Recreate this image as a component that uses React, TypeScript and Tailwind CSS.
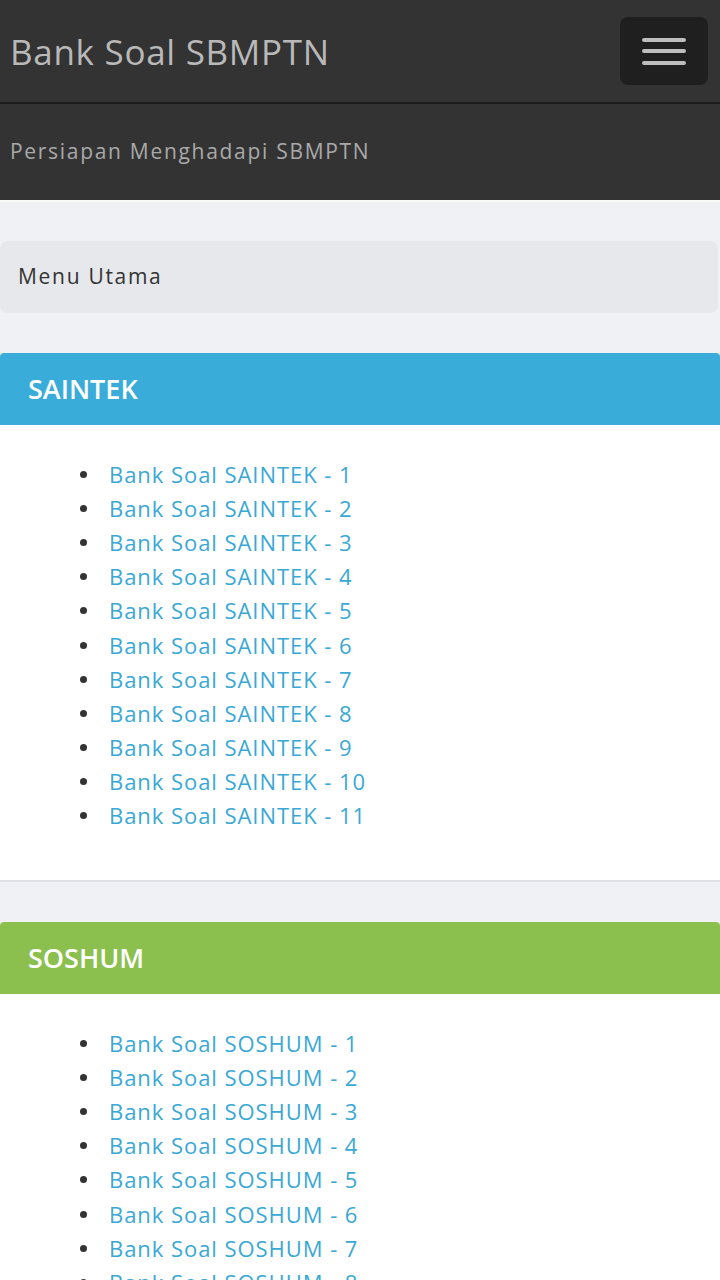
const saintek = Array.from({ length: 11 }, (_, i) => `Bank Soal SAINTEK - ${i + 1}`)
const soshum = Array.from({ length: 9 }, (_, i) => `Bank Soal SOSHUM - ${i + 1}`)

function LinkList({ items }: { items: string[] }) {
  return (
    <ul className="pb-[47px] pl-[80px] pt-[32px]">
      {items.map((item) => (
        <li key={item} className="flex h-[34.2px] items-center">
          <span className="mr-[22px] h-[7px] w-[7px] shrink-0 rounded-full bg-[#333]" />
          <a href="#" className="text-[22px] tracking-[0.95px] text-[#3aa8d5]">
            {item}
          </a>
        </li>
      ))}
    </ul>
  )
}

function Section({ title, color, items }: { title: string; color: string; items: string[] }) {
  return (
    <section className="mt-[40px] border-b-2 border-[#dfe1e6] bg-white">
      <h2
        className={`flex h-[72px] items-center rounded-t-[4px] pl-[28px] text-[27px] font-semibold tracking-[0px] text-white ${color}`}
      >
        {title}
      </h2>
      <LinkList items={items} />
    </section>
  )
}

export default function App() {
  return (
    <div
      className="min-h-screen bg-[#f0f1f5]"
      style={{ fontFamily: '"Open Sans", "Noto Sans", sans-serif' }}
    >
      <header className="bg-[#333]">
        <div className="flex h-[104px] items-center justify-between border-b-2 border-[#1c1c1c] pl-[10px] pr-[12px]">
          <h1 className="pt-[3px] text-[35px] tracking-[0.7px] text-[#b9b9b9]">Bank Soal SBMPTN</h1>
          <button className="flex h-[68px] w-[88px] flex-col items-center justify-center gap-[7.5px] rounded-[8px] bg-[#1f1f1f]">
            <span className="h-[4px] w-[44px] rounded-full bg-[#bdbdbd]" />
            <span className="h-[4px] w-[44px] rounded-full bg-[#bdbdbd]" />
            <span className="h-[4px] w-[44px] rounded-full bg-[#bdbdbd]" />
          </button>
        </div>
        <div className="flex h-[98px] items-center border-b-2 border-[#fafafa] pl-[10px]">
          <p className="text-[21px] tracking-[1.7px] text-[#a9a9a9]">Persiapan Menghadapi SBMPTN</p>
        </div>
      </header>

      <main className="pt-[39px]">
        <div className="mr-[2px] flex h-[72px] items-center rounded-[8px] bg-[#e6e8ec] pl-[18px]">
          <span className="text-[21px] tracking-[1.7px] text-[#333]">Menu Utama</span>
        </div>

        <Section title="SAINTEK" color="bg-[#3aacd9]" items={saintek} />
        <Section title="SOSHUM" color="bg-[#8bc04e]" items={soshum} />
      </main>
    </div>
  )
}
